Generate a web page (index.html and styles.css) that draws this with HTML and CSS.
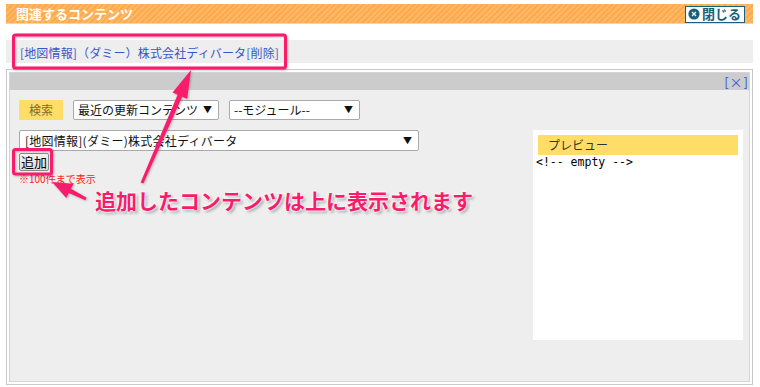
FILE: index.html
```html
<!DOCTYPE html>
<html lang="ja">
<head>
<meta charset="utf-8">
<link rel="stylesheet" href="styles.css">
</head>
<body>
<div class="wrap">
  <div class="hd">
    <span class="hd-title">関連するコンテンツ</span>
    <span class="close"><svg class="close-ic" width="12" height="12" viewBox="0 0 12 12"><circle cx="6" cy="6" r="5.6" fill="#17607e"/><path d="M4 4 L8 8 M8 4 L4 8" stroke="#fff" stroke-width="1.2"/></svg>閉じる</span>
  </div>
  <div class="sel"><span class="link">[地図情報]（ダミー）株式会社ディバータ[削除]</span></div>
  <div class="panel">
    <div class="panel-in">
      <div class="bar"><span class="x">[×]</span></div>
      <div class="body">
        <div class="search">
          <span class="label">検索</span>
          <div class="select s1"><span>最近の更新コンテンツ</span><span class="arr">▼</span></div>
          <div class="select s2"><span>--モジュール--</span><span class="arr">▼</span></div>
        </div>
        <div class="row">
          <div class="left">
            <div class="select s3"><span class="s3-text">[地図情報](ダミー)株式会社ディバータ</span><span class="arr">▼</span></div>
            <span class="add">追加</span>
            <div class="note">※100件まで表示</div>
          </div>
          <div class="preview">
            <div class="pv-hd">プレビュー</div>
            <pre class="pv-code">&lt;!-- empty --&gt;</pre>
          </div>
        </div>
      </div>
    </div>
  </div>
  <svg class="overlay" width="760" height="387" viewBox="0 0 760 387">
    <defs>
      <filter id="sh" x="-20%" y="-20%" width="140%" height="140%">
        <feDropShadow dx="1" dy="1" stdDeviation="1" flood-color="#000" flood-opacity="0.25"/>
      </filter>
    </defs>
    <g filter="url(#sh)">
      <rect x="13.5" y="35" width="272" height="33" rx="2" fill="none" stroke="#f81d6c" stroke-width="3"/>
      <rect x="13.5" y="149.5" width="38" height="24.5" rx="2" fill="none" stroke="#f81d6c" stroke-width="3"/>
      <polygon fill="#f81d6c" points="191,70 187.2,98.9 182.2,96.7 143.4,183.6 140.6,182.4 177.6,94.7 172.6,92.5"/>
      <polygon fill="#f81d6c" points="52,182 73.5,183.8 71,188.7 86.7,197.7 85.3,200.3 68.8,193.1 66.3,198.1"/>
    </g>
  </svg>
  <div class="callout">追加したコンテンツは上に表示されます</div>
</div>
</body>
</html>
```
FILE: styles.css
```css
html, body {
  margin: 0;
  padding: 0;
  background: #fff;
}
body {
  font-family: "Noto Sans CJK JP", "Noto Sans", sans-serif;
  font-size: 12px;
  color: #222;
}
.wrap {
  position: relative;
  width: 747px;
  padding-top: 4px;
  margin-left: 6px;
}
.hd {
  height: 19px;
  border-bottom: 1px solid #ffd39a;
  background: repeating-linear-gradient(135deg, #ffa94f 0 2px, #ffb866 2px 4px);
  display: flex;
  align-items: center;
  justify-content: space-between;
  padding: 0 8px 0 10px;
}
.hd-title {
  color: #fff;
  font-weight: bold;
  font-size: 13px;
  line-height: 19px;
}
.close {
  display: flex;
  align-items: center;
  gap: 2px;
  height: 17px;
  width: 60px;
  box-sizing: border-box;
  border: 1px solid #17607e;
  background: #fff;
  color: #17607e;
  font-weight: bold;
  font-size: 13px;
  line-height: 14px;
  padding-left: 2px;
  margin-top: 1px;
}
.close-ic { flex: none; }
.sel {
  margin-top: 16px;
  height: 23px;
  background: #eeeeee;
  display: flex;
  align-items: center;
  padding-left: 14px;
}
.link {
  color: #3a55c8;
  font-size: 12px;
  letter-spacing: 0.15px;
  padding-top: 1px;
}
.panel {
  margin-top: 6px;
  border: 1px solid #c8c8c8;
  padding: 2px;
  background: #fff;
  height: 310px;
}
.panel-in {
  border: 1px solid #d4d4d4;
  background: #eeeeee;
  height: 308px;
}
.bar {
  height: 17px;
  background: #cccccc;
  display: flex;
  justify-content: flex-end;
  align-items: center;
}
.x {
  color: #3355dd;
  font-size: 13px;
  line-height: 17px;
  letter-spacing: 1px;
}
.body {
  padding: 10px 6px 0 9px;
}
.search {
  display: flex;
  align-items: center;
  height: 20px;
}
.label {
  width: 44px;
  height: 20px;
  background: #ffdd66;
  color: #7d6d35;
  text-align: center;
  line-height: 20px;
  margin-right: 10px;
}
.select {
  box-sizing: border-box;
  height: 20px;
  border: 1px solid #a9a9a9;
  border-radius: 2px;
  background: #fff;
  display: flex;
  align-items: center;
  justify-content: space-between;
  padding: 0 6px 0 4px;
  color: #111;
  line-height: 18px;
}
.arr {
  font-size: 9px;
  color: #111;
}
.s1 { width: 146px; margin-right: 10px; }
.s2 { width: 131px; }
.row {
  display: flex;
  justify-content: space-between;
  margin-top: 10px;
}
.left {
  width: 400px;
}
.s3 {
  width: 400px;
  height: 21px;
  padding-left: 5px;
}
.s3-text {
  letter-spacing: 0.25px;
}
.add {
  display: block;
  box-sizing: border-box;
  margin-top: 2px;
  width: 30px;
  height: 18px;
  border: 1px solid #8a8a8a;
  border-radius: 2px;
  background: linear-gradient(#f2f2f2, #dcdcdc);
  text-align: center;
  line-height: 16px;
  color: #000;
  font-size: 13px;
}
.note {
  color: #ff2020;
  font-size: 10px;
  line-height: 11px;
  margin-top: 2px;
}
.preview {
  width: 210px;
  height: 210px;
  background: #fff;
  padding-top: 5px;
  box-sizing: border-box;
}
.pv-hd {
  margin: 0 5px;
  height: 20px;
  background: #ffdd66;
  color: #333;
  padding-left: 10px;
  line-height: 20px;
}
.pv-code {
  margin: 0 0 0 3px;
  font-family: "DejaVu Sans Mono", monospace;
  font-size: 11.5px;
  line-height: 15px;
  color: #000;
}
.overlay {
  position: absolute;
  left: -6px;
  top: 0;
  pointer-events: none;
}
.callout {
  position: absolute;
  left: 89px;
  top: 185px;
  font-size: 21px;
  font-weight: bold;
  color: #f81d6c;
  white-space: nowrap;
  text-shadow: 0 0 2px #fff, 0 0 2px #fff, 0 0 3px #fff, 2px 2px 3px rgba(0,0,0,0.35);
}
```
